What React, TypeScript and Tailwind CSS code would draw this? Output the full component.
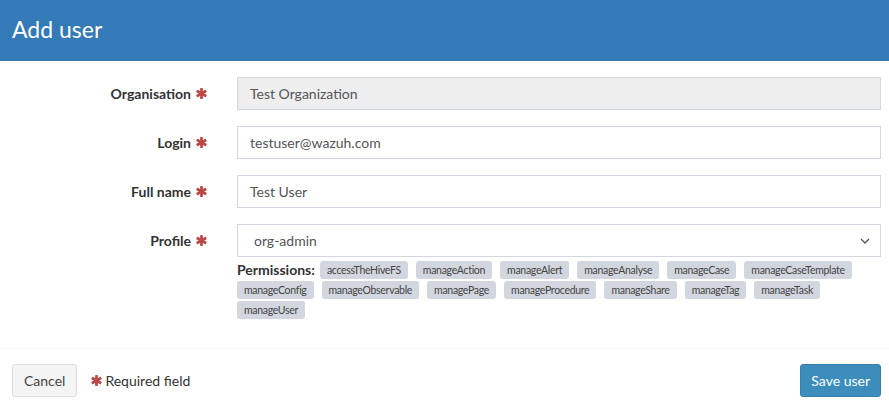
import React from "react";

const Star = () => (
  <svg width="11" height="11" viewBox="0 0 24 24" className="inline-block ml-[5px] align-[-1px]">
    <g fill="#b94a48">
      <rect x="9" y="0" width="6" height="24" rx="1" />
      <rect x="9" y="0" width="6" height="24" rx="1" transform="rotate(60 12 12)" />
      <rect x="9" y="0" width="6" height="24" rx="1" transform="rotate(-60 12 12)" />
    </g>
  </svg>
);

const perms = [
  "accessTheHiveFS",
  "manageAction",
  "manageAlert",
  "manageAnalyse",
  "manageCase",
  "manageCaseTemplate",
  "manageConfig",
  "manageObservable",
  "managePage",
  "manageProcedure",
  "manageShare",
  "manageTag",
  "manageTask",
  "manageUser",
];

const Row = ({ label, children }: { label: string; children: React.ReactNode }) => (
  <div className="grid grid-cols-[222px_1fr] mb-[16px]">
    <div className="pr-[15px] text-right font-bold text-[14px] text-[#333] h-[33px] flex items-center justify-end">
      {label}
      <Star />
    </div>
    <div className="pl-[15px] pr-[8px]">{children}</div>
  </div>
);

export default function App() {
  return (
    <div className="w-[889px] h-[412px] bg-white overflow-hidden" style={{ fontFamily: "Lato, 'Noto Sans', sans-serif" }}>
      <div className="h-[61px] bg-[#337ab7] flex items-center pl-[12px]">
        <h1 className="text-[23px] text-white font-normal leading-none mt-[-2px]">Add user</h1>
      </div>
      <div className="pt-[16px] pb-[14px]">
        <Row label="Organisation">
          <div className="h-[33px] border border-[#d2d6de] bg-[#eee] flex items-center px-[12px] text-[14px] text-[#555]">
            Test Organization
          </div>
        </Row>
        <Row label="Login">
          <div className="h-[33px] border border-[#d2d6de] bg-white flex items-center px-[12px] text-[14px] text-[#555]">
            testuser@wazuh.com
          </div>
        </Row>
        <Row label="Full name">
          <div className="h-[33px] border border-[#d2d6de] bg-white flex items-center px-[12px] text-[14px] text-[#555]">
            Test User
          </div>
        </Row>
        <div className="grid grid-cols-[222px_1fr]">
          <div className="pr-[15px] text-right font-bold text-[14px] text-[#333] h-[33px] flex items-center justify-end">
            Profile
            <Star />
          </div>
          <div className="pl-[15px] pr-[8px]">
            <div className="h-[33px] border border-[#d2d6de] bg-white flex items-center justify-between pl-[16px] pr-[10px] text-[14px] text-[#555]">
              <span>org-admin</span>
              <svg width="10" height="6" viewBox="0 0 10 6">
                <path d="M1 1l4 4 4-4" fill="none" stroke="#555" strokeWidth="1.3" />
              </svg>
            </div>
            <div className="flex flex-wrap items-center gap-x-[8px] gap-y-[2px] mt-[4px]">
              <span className="font-bold text-[14px] text-[#333] leading-[18px] mr-[-3px]">Permissions:</span>
              {perms.map((p) => (
                <span
                  key={p}
                  className="bg-[#d2d6de] text-[#444] text-[10.5px] tracking-[-0.3px] leading-[18px] h-[18px] px-[7px] rounded-[3px]"
                >
                  {p}
                </span>
              ))}
            </div>
          </div>
        </div>
      </div>
      <div className="border-t border-[#f4f4f4] mt-[15px] pt-[15px] px-[12px] pr-[8px] flex items-center justify-between">
        <div className="flex items-center">
          <button className="h-[33px] px-[11px] bg-[#f4f4f4] border border-[#ddd] rounded-[3px] text-[14px] text-[#444]">
            Cancel
          </button>
          <span className="ml-[9px] text-[14px] text-[#333] flex items-center">
            <Star />
            <span className="ml-[3px]">Required field</span>
          </span>
        </div>
        <button className="h-[33px] px-[10px] bg-[#3c8dbc] border border-[#367fa9] rounded-[3px] text-[14px] text-white">
          Save user
        </button>
      </div>
    </div>
  );
}
